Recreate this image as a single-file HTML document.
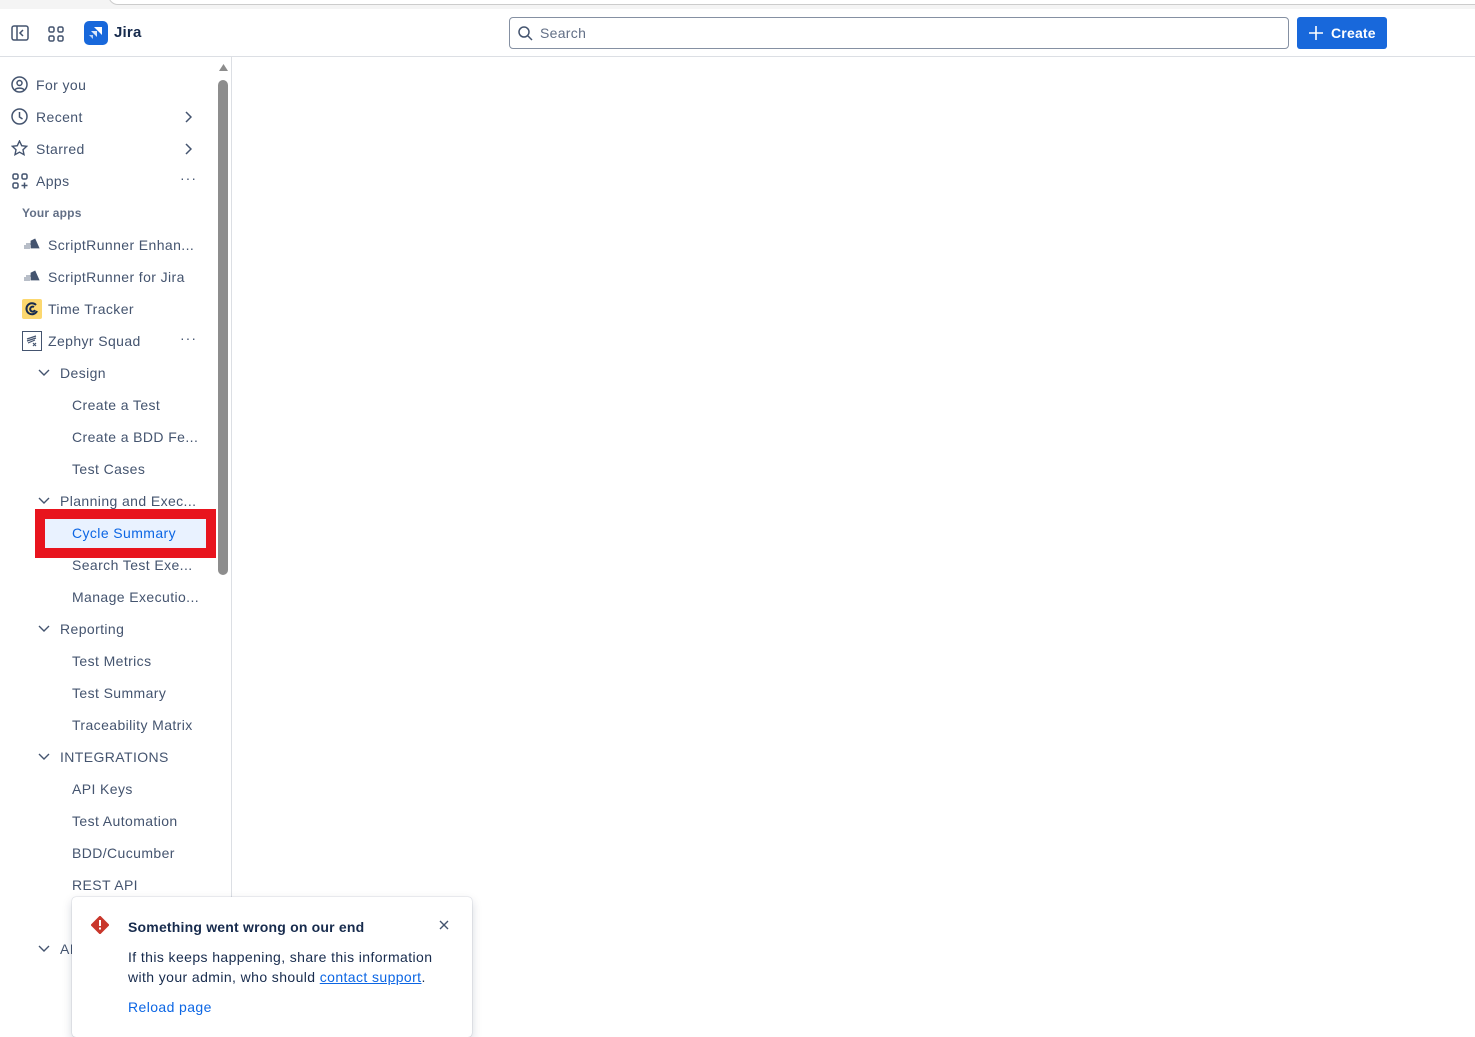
<!DOCTYPE html>
<html><head><meta charset="utf-8"><style>
*{box-sizing:border-box;margin:0;padding:0}
body{width:1475px;height:1028px;overflow:hidden;background:#fff;font-family:"Liberation Sans",sans-serif;color:#44546f;position:relative}
.topstrip{position:absolute;left:0;top:0;width:1475px;height:9px;background:#f4f4f4}
.topstrip .tab{position:absolute;left:108px;top:-6px;width:1380px;height:11px;background:#fff;border:1px solid #ccc;border-radius:0 0 0 10px}
.header{position:absolute;left:0;top:9px;width:1475px;height:48px;border-bottom:1px solid #dcdfe4}
.search{position:absolute;left:509px;top:8px;width:780px;height:32px;border:1px solid #8590a2;border-radius:4px}
.search span{position:absolute;left:30px;top:7px;font-size:14px;color:#626f86;letter-spacing:.3px}
.create{position:absolute;left:1297px;top:8px;width:90px;height:32px;background:#1868db;border-radius:3px;color:#fff;font-size:14px;font-weight:bold}
.create span{position:absolute;left:34px;top:8px;letter-spacing:.2px}
.side{position:absolute;left:0;top:57px;width:232px;height:971px;border-right:1px solid #dcdfe4}
.sb{position:absolute;left:218px;top:80px;width:10px;height:495px;background:#8d8d8d;border-radius:5px}
.item{position:absolute;font-size:14px;white-space:nowrap;color:#44546f;letter-spacing:.4px}
.ic{position:absolute}
.red{position:absolute;left:35px;top:509px;width:181px;height:49px;border:10px solid #e8141e}
.sel{position:absolute;left:45px;top:519px;width:161px;height:29px;background:#e9f2ff}
.toast{position:absolute;left:72px;top:897px;width:400px;height:140px;background:#fff;border-radius:4px;box-shadow:0 0 1px rgba(9,30,66,.4),0 4px 10px rgba(9,30,66,.18)}
</style></head><body>
<div class="topstrip"><div class="tab"></div></div>
<div class="header">
<svg class="ic" style="left:11px;top:16px" width="18" height="16" viewBox="0 0 18 16"><rect x="1" y="1" width="16" height="14" rx="2" fill="none" stroke="#44546f" stroke-width="1.5"/><line x1="6" y1="1" x2="6" y2="15" stroke="#44546f" stroke-width="1.5"/><path d="M12 5l-3 3 3 3" fill="none" stroke="#44546f" stroke-width="1.5"/></svg>
<svg class="ic" style="left:48px;top:17px" width="16" height="16" viewBox="0 0 16 16" fill="none" stroke="#44546f" stroke-width="1.5"><rect x="1" y="1" width="5" height="5" rx="1.5"/><rect x="10" y="1" width="5" height="5" rx="1.5"/><rect x="1" y="10" width="5" height="5" rx="1.5"/><rect x="10" y="10" width="5" height="5" rx="1.5"/></svg>
<div style="position:absolute;left:84px;top:12px;width:24px;height:24px;background:#1868db;border-radius:5px"></div>
<svg class="ic" style="left:88px;top:16px" width="16" height="16" viewBox="0 0 16 16" fill="#fff"><path d="M6 2h8v8l-3-3z"/><path d="M3 6h6v6l-2-2z" opacity=".85"/><path d="M1 10h4v4z" opacity=".7"/></svg>
<div class="item" style="left:114px;top:15px;font-weight:bold;color:#172b4d;font-size:15px;letter-spacing:.2px">Jira</div>
<div class="search"><svg class="ic" style="left:8px;top:8px" width="15" height="15" viewBox="0 0 15 15" fill="none" stroke="#44546f" stroke-width="1.5"><circle cx="6" cy="6" r="5"/><path d="M10 10l4 4"/></svg><span>Search</span></div>
<div class="create"><svg class="ic" style="left:12px;top:9px" width="14" height="14" viewBox="0 0 14 14" stroke="#fff" stroke-width="1.6"><path d="M7 0v14M0 7h14"/></svg><span>Create</span></div>
</div>
<div class="side">
<svg class="ic" style="left:219px;top:7px" width="9" height="7" viewBox="0 0 9 7"><path d="M0 7L4.5 0 9 7z" fill="#8d8d8d"/></svg>
</div>
<div class="sb"></div>

<svg class="ic" style="left:11px;top:76px" width="17" height="17" viewBox="0 0 17 17" fill="none" stroke="#44546f" stroke-width="1.5"><circle cx="8.5" cy="8.5" r="7.5"/><circle cx="8.5" cy="7" r="2.5"/><path d="M4 14c1-2.5 8-2.5 9 0"/></svg>
<div class="item" style="left:36px;top:77px">For you</div>
<svg class="ic" style="left:11px;top:108px" width="17" height="17" viewBox="0 0 17 17" fill="none" stroke="#44546f" stroke-width="1.5"><circle cx="8.5" cy="8.5" r="7.5"/><path d="M8.5 4v5l3 2"/></svg>
<div class="item" style="left:36px;top:109px">Recent</div>
<svg class="ic" style="left:184px;top:111px" width="8" height="12" viewBox="0 0 8 12" fill="none" stroke="#44546f" stroke-width="1.5"><path d="M2 1l5 5-5 5"/></svg>
<svg class="ic" style="left:11px;top:140px" width="17" height="17" viewBox="0 0 17 17" fill="none" stroke="#44546f" stroke-width="1.4"><path d="M8.5 1l2.2 4.7 5 .6-3.7 3.4 1 5L8.5 12.2 4 14.7l1-5L1.3 6.3l5-.6z"/></svg>
<div class="item" style="left:36px;top:141px">Starred</div>
<svg class="ic" style="left:184px;top:143px" width="8" height="12" viewBox="0 0 8 12" fill="none" stroke="#44546f" stroke-width="1.5"><path d="M2 1l5 5-5 5"/></svg>
<svg class="ic" style="left:12px;top:173px" width="16" height="16" viewBox="0 0 16 16" fill="none" stroke="#44546f" stroke-width="1.5"><rect x="1" y="1" width="5" height="5" rx="1.5"/><rect x="10" y="1" width="5" height="5" rx="1.5"/><rect x="1" y="10" width="5" height="5" rx="1.5"/><path d="M12.5 9.5v6M9.5 12.5h6"/></svg>
<div class="item" style="left:36px;top:173px">Apps</div>
<div class="item" style="left:180px;top:170px;letter-spacing:1px">···</div>
<div class="item" style="left:22px;top:206px;font-size:12px;font-weight:bold;color:#626f86;letter-spacing:.2px">Your apps</div>

<svg class="ic" style="left:24px;top:238px" width="16" height="12" viewBox="0 0 16 12"><path d="M0 8h6M0 10h6M2 6h5M7 3l4-2 4 9H7z" fill="#44546f" stroke="#44546f" stroke-width=".8"/></svg>
<div class="item" style="left:48px;top:237px">ScriptRunner Enhan...</div>
<svg class="ic" style="left:24px;top:270px" width="16" height="12" viewBox="0 0 16 12"><path d="M0 8h6M0 10h6M2 6h5M7 3l4-2 4 9H7z" fill="#44546f" stroke="#44546f" stroke-width=".8"/></svg>
<div class="item" style="left:48px;top:269px">ScriptRunner for Jira</div>
<div style="position:absolute;left:22px;top:299px;width:20px;height:20px;background:#fcd86f;border-radius:2px"></div>
<svg class="ic" style="left:25px;top:302px" width="14" height="14" viewBox="0 0 14 14" fill="none" stroke="#172b4d" stroke-width="2"><path d="M11 3A5.5 5.5 0 1 0 12 9"/><path d="M9 5a2.5 2.5 0 1 0 1 3"/></svg>
<div class="item" style="left:48px;top:301px">Time Tracker</div>
<div style="position:absolute;left:22px;top:331px;width:20px;height:20px;border:1.5px solid #44546f"></div>
<svg class="ic" style="left:25px;top:334px" width="14" height="14" viewBox="0 0 14 14" fill="none" stroke="#44546f" stroke-width="1.2"><path d="M2 5l9-3M2 7l9-3M3 9l7-3M8 9l3 3M8 12l3-3"/></svg>
<div class="item" style="left:48px;top:333px">Zephyr Squad</div>
<div class="item" style="left:180px;top:330px;letter-spacing:1px">···</div>

<svg class="ic" style="left:38px;top:369px" width="12" height="8" viewBox="0 0 12 8" fill="none" stroke="#44546f" stroke-width="1.4"><path d="M1 1l5 5 5-5"/></svg>
<div class="item" style="left:60px;top:365px">Design</div>
<div class="item" style="left:72px;top:397px">Create a Test</div>
<div class="item" style="left:72px;top:429px">Create a BDD Fe...</div>
<div class="item" style="left:72px;top:461px">Test Cases</div>
<svg class="ic" style="left:38px;top:497px" width="12" height="8" viewBox="0 0 12 8" fill="none" stroke="#44546f" stroke-width="1.4"><path d="M1 1l5 5 5-5"/></svg>
<div class="item" style="left:60px;top:493px">Planning and Exec...</div>
<div class="red"></div><div class="sel"></div>
<div class="item" style="left:72px;top:525px;color:#0c66e4">Cycle Summary</div>
<div class="item" style="left:72px;top:557px">Search Test Exe...</div>
<div class="item" style="left:72px;top:589px">Manage Executio...</div>
<svg class="ic" style="left:38px;top:625px" width="12" height="8" viewBox="0 0 12 8" fill="none" stroke="#44546f" stroke-width="1.4"><path d="M1 1l5 5 5-5"/></svg>
<div class="item" style="left:60px;top:621px">Reporting</div>
<div class="item" style="left:72px;top:653px">Test Metrics</div>
<div class="item" style="left:72px;top:685px">Test Summary</div>
<div class="item" style="left:72px;top:717px">Traceability Matrix</div>
<svg class="ic" style="left:38px;top:753px" width="12" height="8" viewBox="0 0 12 8" fill="none" stroke="#44546f" stroke-width="1.4"><path d="M1 1l5 5 5-5"/></svg>
<div class="item" style="left:60px;top:749px">INTEGRATIONS</div>
<div class="item" style="left:72px;top:781px">API Keys</div>
<div class="item" style="left:72px;top:813px">Test Automation</div>
<div class="item" style="left:72px;top:845px">BDD/Cucumber</div>
<div class="item" style="left:72px;top:877px">REST API</div>
<svg class="ic" style="left:38px;top:945px" width="12" height="8" viewBox="0 0 12 8" fill="none" stroke="#44546f" stroke-width="1.4"><path d="M1 1l5 5 5-5"/></svg>
<div class="item" style="left:60px;top:941px">AI</div>

<div class="toast">
<svg class="ic" style="left:19px;top:19px" width="18" height="18" viewBox="0 0 18 18"><path d="M9 0.5L17.5 9 9 17.5 0.5 9z" fill="#c9372c" stroke="#c9372c" stroke-linejoin="round" stroke-width="1.5"/><rect x="8" y="4" width="2" height="6" fill="#fff"/><rect x="8" y="11.5" width="2" height="2" fill="#fff"/></svg>
<div class="item" style="left:56px;top:22px;font-weight:bold;color:#172b4d;letter-spacing:.2px">Something went wrong on our end</div>
<svg class="ic" style="left:367px;top:23px" width="10" height="10" viewBox="0 0 10 10" stroke="#44546f" stroke-width="1.4"><path d="M1 1l8 8M9 1l-8 8"/></svg>
<div class="item" style="left:56px;top:50px;color:#172b4d;line-height:20px;white-space:normal;width:312px">If this keeps happening, share this information with your admin, who should <span style="color:#0c66e4;text-decoration:underline">contact support</span>.</div>
<div class="item" style="left:56px;top:102px;color:#0c66e4">Reload page</div>
</div>
</body></html>
